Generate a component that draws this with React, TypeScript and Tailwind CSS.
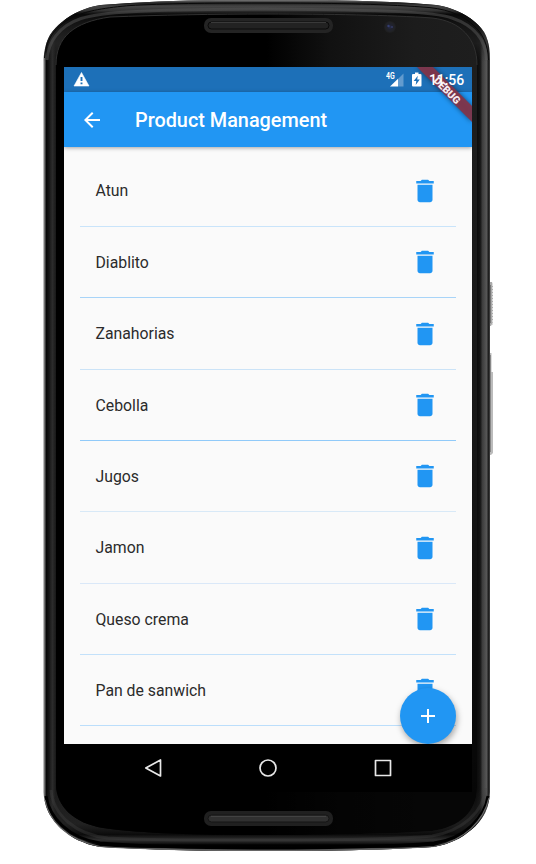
import React from "react";
import { MdArrowBack, MdDelete, MdAdd } from "react-icons/md";

const products = [
  { name: "Atun", row: "h-[72px] border-[#c9e4fa]" },
  { name: "Diablito", row: "h-[71px] border-[#a8d4f8]" },
  { name: "Zanahorias", row: "h-[72px] border-[#cbe3f7]" },
  { name: "Cebolla", row: "h-[71px] border-[#90caf9]" },
  { name: "Jugos", row: "h-[71px] border-[#d8e9f7]" },
  { name: "Jamon", row: "h-[72px] border-[#dae8f8]" },
  { name: "Queso crema", row: "h-[71px] border-[#c3e1fa]" },
  { name: "Pan de sanwich", row: "h-[71px] border-[#bbdefb]" },
];

const shell =
  "M43.5 60 C44 51 46 42 50 35 C53 30 57 26 62 22 C68 17 73 14 80 11 C87 8 93 6 101 5 C140 2 178 .5 217 0 H327 C365 1 403 2 436 5 C444 6 450 8 457 11 C464 14 469 17 475 22 C480 26 484 31 486 36 C489 43 490 51 490 60 V792 C489.500 802 487 811 482 818 C478 824 473 829 467 833 C461 838 456 840 451 842 C444 845 438 846 432 847 C400 849 360 850 324 851 H210 C174 850 138 849 102 847 C95 846 89 845 83 842 C76 840 71 836 67 833 C61 829 56 824 52 818 C47 811 44 802 43.500 792 Z";

function PhoneBody() {
  return (
    <svg className="absolute inset-0" width="536" height="864" viewBox="0 0 536 864" fill="none" aria-hidden="true">
      <defs>
        <linearGradient id="metal" x1="44" x2="490" y1="0" y2="0" gradientUnits="userSpaceOnUse">
          <stop stopColor="#808080" />
          <stop offset=".003" stopColor="#5a5a5a" />
          <stop offset=".004" stopColor="#050505" />
          <stop offset=".01" stopColor="#131313" />
          <stop offset=".019" stopColor="#2c2c2c" />
          <stop offset=".026" stopColor="#1a1a1a" />
          <stop offset=".5" stopColor="#232323" />
          <stop offset=".968" stopColor="#080808" />
          <stop offset=".978" stopColor="#141414" />
          <stop offset=".983" stopColor="#3d3d3d" />
          <stop offset=".993" stopColor="#585858" />
          <stop offset=".996" stopColor="#181818" />
          <stop offset="1" stopColor="#444" />
        </linearGradient>
        <linearGradient id="top" x1="0" x2="0" y1="0" y2="62" gradientUnits="userSpaceOnUse">
          <stop stopColor="#777" />
          <stop offset=".05" stopColor="#202020" />
          <stop offset=".1" stopColor="#454545" />
          <stop offset=".17" stopColor="#333" />
          <stop offset=".23" stopColor="#090909" />
          <stop offset=".7" stopColor="#292929" stopOpacity=".6" />
          <stop offset="1" stopColor="#252525" stopOpacity="0" />
        </linearGradient>
        <linearGradient id="bottom" x1="0" x2="0" y1="790" y2="851" gradientUnits="userSpaceOnUse">
          <stop stopColor="#292929" stopOpacity="0" />
          <stop offset=".55" stopColor="#242424" stopOpacity=".7" />
          <stop offset=".73" stopColor="#0b0b0b" />
          <stop offset=".82" stopColor="#303030" />
          <stop offset=".87" stopColor="#171717" />
          <stop offset=".9" stopColor="#000" />
          <stop offset=".94" stopColor="#050505" />
          <stop offset=".96" stopColor="#555" />
          <stop offset="1" stopColor="#444" />
        </linearGradient>
        <linearGradient id="glass" x1="56" x2="478" y1="0" y2="0" gradientUnits="userSpaceOnUse">
          <stop offset=".5" stopColor="#000" />
          <stop offset=".65" stopColor="#111" />
          <stop offset=".85" stopColor="#1c1c1c" />
          <stop offset="1" stopColor="#1e1e1e" />
        </linearGradient>
        <linearGradient id="shade" x1="0" x2="0" y1="60" y2="792" gradientUnits="userSpaceOnUse">
          <stop stopColor="#000" stopOpacity="0" />
          <stop offset=".5" stopColor="#000" stopOpacity=".2" />
          <stop offset="1" stopColor="#000" stopOpacity=".8" />
        </linearGradient>
        <radialGradient id="lens">
          <stop stopColor="#272b48" />
          <stop offset=".4" stopColor="#20222f" />
          <stop offset=".75" stopColor="#212226" />
          <stop offset="1" stopColor="#1d1d1d" />
        </radialGradient>
      </defs>
      <path d="M489 282 H492 L493 286 V322 L491 326 H489Z" fill="#aaa" />
      <path d="M492.500 284 V325" stroke="#ddd" strokeDasharray="2 1" />
      <path d="M490.500 285 V323" stroke="#777" />
      <path d="M489 353 H491.500 V372 H493 V453 L491 455 H489Z" fill="#bbb" />
      <path d="M490.500 355 V452" stroke="#888" />
      <path d={shell} fill="url(#metal)" />
      <path d={shell} fill="url(#top)" />
      <path d={shell} fill="url(#bottom)" />
      <path d="M44.500 58 C46 37 58 22 81 14 C91 10 116 6 140 5 C185 3 224 3 268 3 C327 3 381 4 422 7 C444 8 461 14 472 24 C484 34 488 46 488.500 60" stroke="#090909" strokeWidth="1" />
      <path d="M46 796 C49 817 68 838 100 843 C146 847 206 848 267 848 C331 848 386 847 434 843 C465 839 485 817 488 796" stroke="#000" strokeWidth="3" />
      <path d="M47 60 C48 42 59 26 81 18.500 C102 12 133 10 267 9 C390 10 435 12 452 18 C476 26 486 42 486.500 60" stroke="#585858" strokeWidth="3" opacity=".5" />
      <path d="M51 790 C53 815 76 835 108 838 C160 841 215 840 267 840 C325 840 390 840 432 836 C462 831 484 812 485.500 788" stroke="#454545" strokeWidth="3" opacity=".35" />
      <path d="M45 800 C49 820 65 839 100 846.500 C146 849.500 206 850.500 267 850.500 C331 850.500 386 849.500 434 846.500 C465 841 484 820 489 798" stroke="#666" strokeWidth="1.200" />
      <path d="M56 65 C56 37 74 22 110 17 C159 15 215 14 267 14 C327 14 391 15 432 18 C461 21 477 39 477 65 V788 C477 811 460 827 432 831 C390 834 327 835 267 835 C207 835 144 834 103 828 C73 823 57 806 56 786Z" fill="url(#glass)" />
      <path d="M56 65 C56 37 74 22 110 17 C159 15 215 14 267 14 C327 14 391 15 432 18 C461 21 477 39 477 65" stroke="#303030" strokeWidth="1" />
      <path d="M56 65 V786 C57 806 73 823 103 828 C144 834 207 835 267 835 C327 835 390 834 432 831 C460 827 477 811 477 788 V65Z" fill="url(#shade)" />
      <rect x="204" y="18" width="129" height="15" rx="7" fill="#242424" />
      <rect x="208" y="22" width="121" height="7" rx="3.500" fill="#222" stroke="#0a0a0a" />
      <path d="M211 22.500 H326" stroke="#393939" />
      <rect x="204" y="811" width="129" height="15" rx="7" fill="#202020" />
      <rect x="208" y="815" width="121" height="7" rx="3.500" fill="#303030" stroke="#151515" />
      <path d="M211 816.500 H326" stroke="#424242" />
      <circle cx="390" cy="27" r="6" fill="url(#lens)" />
      <circle cx="388.500" cy="26" r="1.200" fill="#343e71" />
      <circle cx="392" cy="27" r="1" fill="#333a63" />
    </svg>
  );
}

function StatusBar() {
  return (
    <div className="flex h-[25px] shrink-0 items-center bg-[#1d70b8] pl-[9px] pr-2 text-white">
      <svg width="17" height="17" viewBox="0 0 17 17" aria-hidden="true">
        <path d="M8.500 1.500 L16 15 H1Z" fill="white" stroke="white" strokeWidth=".6" strokeLinejoin="round" />
        <path d="M8.500 6 V10 M8.500 11.500 V13.300" stroke="#1d70b8" strokeWidth="1.900" />
      </svg>
      <svg className="ml-auto" width="19" height="20" viewBox="0 0 19 20" aria-hidden="true">
        <path d="M17.500 3.500 V16.500 H12 V9Z" fill="#639bce" />
        <path d="M4 16.500 L12 8.700 V16.500Z" fill="white" />
        <path d="M0 1 H10 V8 L7.500 10 H0Z" fill="#1d70b8" />
        <text x="0" y="8.500" fill="white" fontFamily="Roboto, sans-serif" fontSize="8.300" fontWeight="700" textLength="8.700" lengthAdjust="spacingAndGlyphs">4G</text>
      </svg>
      <svg className="ml-[7px]" width="10" height="20" viewBox="0 0 10 20" aria-hidden="true">
        <path d="M3 2.500 H6.500 V4 H8.500 Q9.500 4 9.500 5 V15.500 Q9.500 16.500 8.500 16.500 H1 Q0 16.500 0 15.500 V5 Q0 4 1 4 H3Z" fill="white" />
        <path d="M5.800 5.700 L1.700 11 H4.300 L3.700 15 L7.800 9.500 H5.200Z" fill="#1d70b8" />
      </svg>
      <span className="relative z-10 ml-[7px] w-[35px] whitespace-nowrap text-[14px] font-medium leading-5 tracking-[-.1px]">11:56</span>
    </div>
  );
}

function ProductRow({ name, row }: { name: string; row: string }) {
  return (
    <li className={"flex shrink-0 items-center justify-between border-b pl-[15.500px] pr-4 text-[#2b2b2b] " + row}>
      <span className="pt-px text-[15.800px] leading-5">{name}</span>
      <button aria-label={"Delete " + name} className="text-[#2196f3]">
        <MdDelete size={30} />
      </button>
    </li>
  );
}

function DebugRibbon() {
  return (
    <svg className="absolute right-0 top-0" width="62" height="62" viewBox="0 0 62 62" aria-hidden="true">
      <defs>
        <filter id="ribbonShadow" x="-30%" y="-30%" width="160%" height="160%">
          <feGaussianBlur stdDeviation="2.500" />
        </filter>
      </defs>
      <path d="M7 0 L62 55 V39 L23 0Z" fill="#000" opacity=".5" filter="url(#ribbonShadow)" />
      <path d="M7 0 L62 55 V39 L23 0Z" fill="#82354a" opacity=".94" />
      <text x="37" y="27" transform="rotate(45 37 23.500)" textAnchor="middle" fill="#f7edf1" fontFamily="Roboto, sans-serif" fontSize="10.300" fontWeight="900">DEBUG</text>
    </svg>
  );
}

function NavigationBar() {
  return (
    <nav className="flex h-12 shrink-0 items-center justify-between bg-black px-[78px] text-[#e8e8e8]">
      <svg width="21" height="22" viewBox="0 0 21 22" fill="none" stroke="currentColor" strokeWidth="1.700" strokeLinejoin="round" aria-label="Back">
        <path d="M18.500 3 V19 L3.800 11Z" />
      </svg>
      <svg width="22" height="22" viewBox="0 0 22 22" fill="none" stroke="currentColor" strokeWidth="1.700" aria-label="Home">
        <circle cx="11" cy="11" r="8" />
      </svg>
      <svg width="22" height="22" viewBox="0 0 22 22" fill="none" stroke="currentColor" strokeWidth="1.700" strokeLinejoin="round" aria-label="Overview">
        <rect x="3.500" y="3.500" width="15" height="15" />
      </svg>
    </nav>
  );
}

export default function App() {
  return (
    <main className="relative h-[864px] w-[536px] overflow-hidden bg-white pl-16 pt-[67px] font-['Roboto',sans-serif]">
      <PhoneBody />
      <div className="relative flex h-[725px] w-[408px] flex-col overflow-hidden bg-[#fafafa]">
        <StatusBar />
        <header className="relative flex h-[55px] shrink-0 items-center bg-[#2196f3] pl-[15.500px] text-white shadow-[0_1px_4px_rgba(0,0,0,0.35)]">
          <MdArrowBack size={24} />
          <h1 className="ml-[31.500px] pt-0.5 text-[19.850px] font-medium leading-6">Product Management</h1>
        </header>
        <section className="relative -mt-px min-h-0 flex-1 overflow-hidden px-4 pt-[9px] [clip-path:inset(2px_0_0_0)]">
          <ul className="flex flex-col">
            {products.map((product) => <ProductRow key={product.name} {...product} />)}
          </ul>
          <button aria-label="Add product" className="absolute bottom-0 right-4 flex size-14 items-center justify-center rounded-full bg-[#2196f3] text-white shadow-[1px_3px_6px_rgba(0,0,0,0.35)]">
            <MdAdd size={24} />
          </button>
        </section>
        <NavigationBar />
        <DebugRibbon />
      </div>
    </main>
  );
}
